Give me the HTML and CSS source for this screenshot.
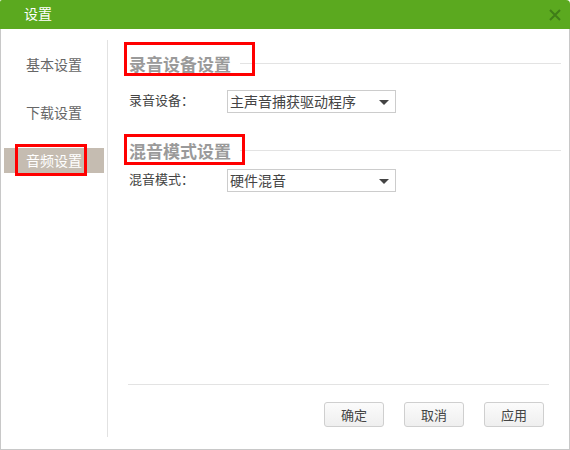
FILE: index.html
```html
<!DOCTYPE html>
<html lang="zh-CN">
<head>
<meta charset="utf-8">
<title>设置</title>
<link rel="stylesheet" href="styles.css">
</head>
<body>
<div class="window">
  <div class="titlebar">
    <span class="title">设置</span>
    <svg class="close" width="12" height="12" viewBox="0 0 12 12"><path d="M1 1 L11 11 M11 1 L1 11" stroke="#3f7d18" stroke-width="2" fill="none"/></svg>
  </div>
  <div class="body">
    <nav class="sidebar">
      <div class="nav-item"><span class="nav-text">基本设置</span></div>
      <div class="nav-item"><span class="nav-text">下载设置</span></div>
      <div class="nav-item active"><span class="nav-text mark mark-nav">音频设置</span></div>
    </nav>
    <main class="content">
      <div class="section-head"><span class="section-title mark mark-h1">录音设备设置</span><span class="rule"></span></div>
      <div class="field field-1">
        <span class="label">录音设备：</span>
        <div class="select"><span class="select-text">主声音捕获驱动程序</span><span class="caret"></span></div>
      </div>
      <div class="section-head section-2"><span class="section-title mark mark-h2">混音模式设置</span><span class="rule"></span></div>
      <div class="field field-2">
        <span class="label">混音模式：</span>
        <div class="select"><span class="select-text">硬件混音</span><span class="caret"></span></div>
      </div>
      <div class="footer">
        <button class="btn">确定</button>
        <button class="btn">取消</button>
        <button class="btn">应用</button>
      </div>
    </main>
  </div>
</div>
</body>
</html>
```

FILE: styles.css
```css
html, body {
  margin: 0;
  padding: 0;
  background: #ffffff;
}
body {
  font-family: "Noto Sans CJK SC", "Noto Sans", "Liberation Sans", sans-serif;
}
.window {
  width: 570px;
  height: 450px;
  display: flex;
  flex-direction: column;
}
.titlebar {
  height: 29px;
  background: #5ba91f;
  display: flex;
  align-items: center;
  justify-content: space-between;
  border-top-right-radius: 4px;
  border-top-left-radius: 2px;
}
.title {
  color: #ffffff;
  font-size: 14px;
  line-height: 26px;
  padding-left: 24px;
  align-self: flex-start;
}
.close {
  margin-right: 9px;
  margin-top: 1px;
}
.body {
  flex: 1;
  display: flex;
  border: 1px solid #c8c8c8;
  border-top: none;
}
.sidebar {
  width: 106px;
  margin: 11px 0 12px 0;
  border-right: 1px solid #e2e2e2;
  padding-top: 12px;
  display: flex;
  flex-direction: column;
  gap: 23px;
}
.nav-item {
  height: 25px;
  line-height: 25px;
  font-size: 14px;
  color: #666666;
  margin-left: 3px;
  width: 100px;
  padding-left: 22px;
  box-sizing: border-box;
}
.nav-item.active {
  background: #c5bcb1;
  color: #ffffff;
}
.nav-text {
  display: inline-block;
}
.mark {
  position: relative;
}
.mark::after {
  content: "";
  position: absolute;
  border: 3px solid #ff0000;
}
.mark-nav::after {
  left: -11px;
  right: -5px;
  top: -4px;
  bottom: -3px;
}
.content {
  flex: 1;
  display: flex;
  flex-direction: column;
  padding: 24px 8px 0 21px;
}
.section-head {
  display: flex;
  align-items: center;
  height: 21px;
  gap: 9px;
}
.section-title {
  font-size: 17px;
  font-weight: bold;
  color: #9a9a9a;
  line-height: 21px;
  white-space: nowrap;
}
.mark-h1::after {
  left: -5px;
  right: -24px;
  top: -11px;
  bottom: -2px;
}
.mark-h2::after {
  left: -5px;
  right: -14px;
  top: -6px;
  bottom: -4px;
}
.rule {
  flex: 1;
  border-top: 1px solid #e3e3e3;
}
.section-2 {
  margin-top: 27px;
}
.field {
  display: flex;
  align-items: center;
  height: 23px;
}
.field-1 {
  margin-top: 16px;
}
.field-2 {
  margin-top: 8px;
}
.label {
  width: 98px;
  font-size: 13px;
  color: #444444;
  line-height: 23px;
  margin-top: -4px;
}
.select {
  width: 169px;
  height: 23px;
  box-sizing: border-box;
  border: 1px solid #cccccc;
  display: flex;
  align-items: center;
  justify-content: space-between;
  padding: 0 6px 0 2px;
  background: #ffffff;
}
.select-text {
  font-size: 14px;
  color: #444444;
  line-height: 21px;
}
.caret {
  width: 0;
  height: 0;
  border-left: 5px solid transparent;
  border-right: 5px solid transparent;
  border-top: 5px solid #444444;
  margin-top: 1px;
}
.footer {
  margin: auto 12px 0 -1px;
  border-top: 1px solid #e3e3e3;
  padding: 17px 5px 22px 0;
  display: flex;
  justify-content: flex-end;
  gap: 20px;
}
.btn {
  width: 60px;
  height: 25px;
  box-sizing: border-box;
  border: 1px solid #cfcfcf;
  border-radius: 3px;
  background: linear-gradient(#fbfbfb, #efefef);
  font-family: "Noto Sans CJK SC", "Noto Sans", sans-serif;
  font-size: 13px;
  color: #444444;
  padding: 0;
  line-height: 22px;
}
```
